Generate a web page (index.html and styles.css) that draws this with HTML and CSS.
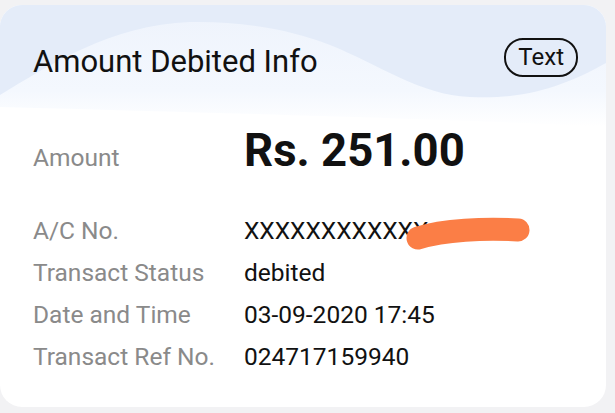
FILE: index.html
```html
<!DOCTYPE html>
<html>
<head>
<meta charset="utf-8">
<link rel="stylesheet" href="styles.css">
</head>
<body>
<div class="card">
  <svg class="wave" width="606" height="140" viewBox="0 0 606 140" aria-hidden="true">
    <defs>
      <linearGradient id="band" x1="0" y1="0" x2="0" y2="1">
        <stop offset="0" stop-color="#eef3fc"/>
        <stop offset="0.7" stop-color="#f4f8fe"/>
        <stop offset="1" stop-color="#ffffff"/>
      </linearGradient>
    </defs>
    <rect x="0" y="0" width="606" height="140" fill="#ffffff"/>
    <path d="M0,0 H606 V122 C500,116 300,110 0,102 Z" fill="url(#band)"/>
    <path d="M0,0 H606 V58 C570,78 530,95 470,92 C420,90 380,60 330,40 C290,24 240,16 190,17 C110,20 50,60 0,90 Z" fill="#e4ecf9"/>
  </svg>
  <header class="head">
    <h1 class="title">Amount Debited Info</h1>
    <span class="pill">Text</span>
  </header>
  <div class="amount-row">
    <span class="label">Amount</span>
    <span class="amount">Rs. 251.00</span>
  </div>
  <div class="rows">
    <span class="label">A/C No.</span>
    <span class="value masked">XXXXXXXXXXXX
      <svg class="scribble" width="130" height="40" viewBox="0 0 130 40" aria-hidden="true">
        <path d="M14,27 C40,19 80,17 114,19" stroke="#fb7e46" stroke-width="23" stroke-linecap="round" fill="none"/>
      </svg>
    </span>
    <span class="label">Transact Status</span>
    <span class="value">debited</span>
    <span class="label">Date and Time</span>
    <span class="value">03-09-2020 17:45</span>
    <span class="label">Transact Ref No.</span>
    <span class="value">024717159940</span>
  </div>
</div>
</body>
</html>
```
FILE: styles.css
```css
html, body {
  margin: 0;
  padding: 0;
}
body {
  background: #f2f2f4;
  width: 615px;
  height: 413px;
  overflow: hidden;
  font-family: Roboto, "Noto Sans", sans-serif;
}
.card {
  position: relative;
  margin: 5px 9px 0 0;
  height: 402px;
  background: #ffffff;
  border-radius: 22px;
  overflow: hidden;
}
.wave {
  position: absolute;
  left: 0;
  top: 0;
}
.head {
  position: relative;
  display: flex;
  align-items: center;
  justify-content: space-between;
  padding: 34px 28px 0 33px;
  height: 42px;
}
.title {
  margin: 0;
  font-size: 31px;
  font-weight: 400;
  color: #111;
  margin-top: 2px;
}
.pill {
  border: 2px solid #111;
  border-radius: 19px;
  font-size: 24px;
  color: #111;
  padding: 2px 12px 3px;
  line-height: 30px;
  margin-top: -6px;
}
.amount-row {
  position: relative;
  display: grid;
  grid-template-columns: 211px 1fr;
  align-items: center;
  padding: 48px 0 0 33px;
  height: 56px;
}
.amount {
  font-size: 45.5px;
  font-weight: 700;
  color: #111;
  margin-top: -14px;
}
.rows {
  position: relative;
  display: grid;
  grid-template-columns: 211px 1fr;
  grid-auto-rows: 41.8px;
  align-items: center;
  padding: 25px 0 0 33px;
}
.label {
  font-size: 24.5px;
  color: #8a8a8a;
}
.value {
  font-size: 24.5px;
  color: #111;
}
.masked {
  position: relative;
}
.scribble {
  position: absolute;
  left: 160px;
  top: -5px;
}
```
